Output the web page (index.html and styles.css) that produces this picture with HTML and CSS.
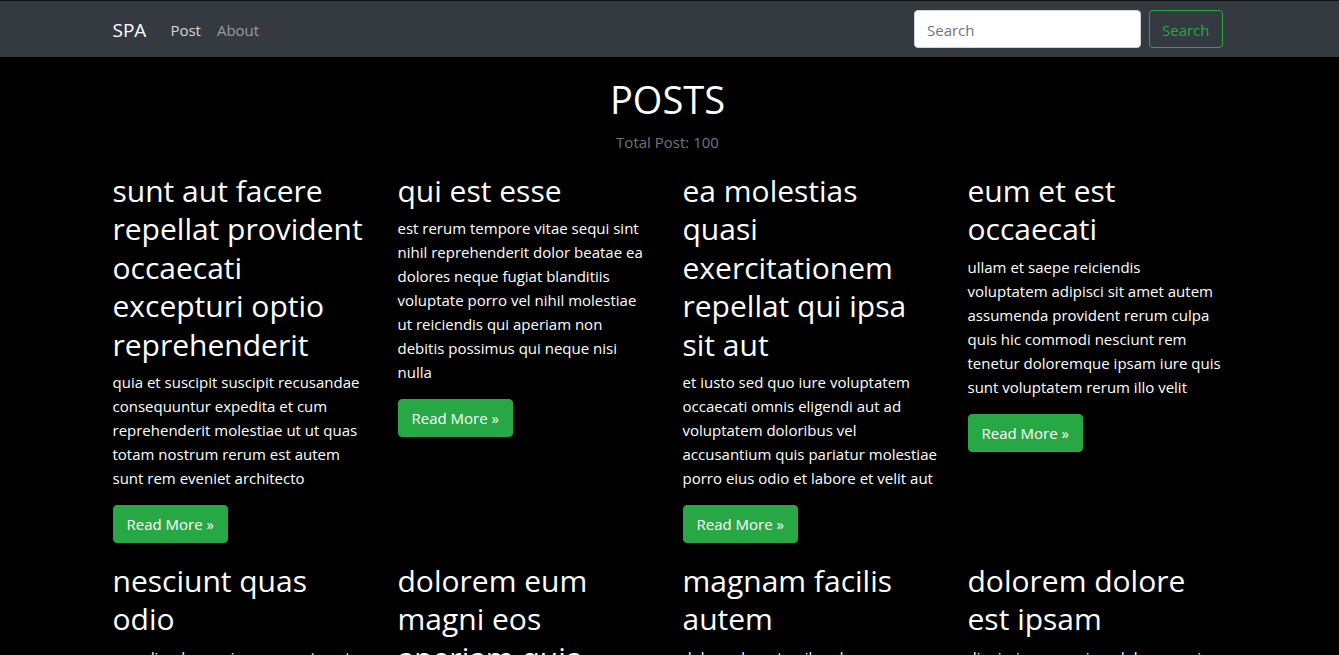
FILE: index.html
```html
<!DOCTYPE html>
<html lang="en">
<head>
<meta charset="utf-8">
<meta name="viewport" content="width=device-width, initial-scale=1">
<title>SPA</title>
<link rel="stylesheet" href="styles.css">
</head>
<body>
<header class="navbar">
  <nav class="container navbar-inner">
    <a class="brand" href="#">SPA</a>
    <ul class="nav-list">
      <li><a class="nav-link active" href="#post">Post</a></li>
      <li><a class="nav-link" href="#about">About</a></li>
    </ul>
    <form class="search" role="search">
      <input class="search-input" type="search" placeholder="Search" aria-label="Search">
      <button class="btn btn-outline" type="submit">Search</button>
    </form>
  </nav>
</header>
<main class="content">
  <div class="container">
    <h1 class="page-title">POSTS</h1>
    <p class="total">Total Post: 100</p>
    <div class="posts">
      <article class="post">
        <h2 class="post-title">sunt aut facere repellat provident occaecati excepturi optio reprehenderit</h2>
        <p class="post-body">quia et suscipit suscipit recusandae consequuntur expedita et cum reprehenderit molestiae ut ut quas totam nostrum rerum est autem sunt rem eveniet architecto</p>
        <a class="btn btn-success" href="#1">Read More »</a>
      </article>
      <article class="post">
        <h2 class="post-title">qui est esse</h2>
        <p class="post-body">est rerum tempore vitae sequi sint nihil reprehenderit dolor beatae ea dolores neque fugiat blanditiis voluptate porro vel nihil molestiae ut reiciendis qui aperiam non debitis possimus qui neque nisi nulla</p>
        <a class="btn btn-success" href="#2">Read More »</a>
      </article>
      <article class="post">
        <h2 class="post-title">ea molestias quasi exercitationem repellat qui ipsa sit aut</h2>
        <p class="post-body">et iusto sed quo iure voluptatem occaecati omnis eligendi aut ad voluptatem doloribus vel accusantium quis pariatur molestiae porro eius odio et labore et velit aut</p>
        <a class="btn btn-success" href="#3">Read More »</a>
      </article>
      <article class="post">
        <h2 class="post-title">eum et est occaecati</h2>
        <p class="post-body">ullam et saepe reiciendis voluptatem adipisci sit amet autem assumenda provident rerum culpa quis hic commodi nesciunt rem tenetur doloremque ipsam iure quis sunt voluptatem rerum illo velit</p>
        <a class="btn btn-success" href="#4">Read More »</a>
      </article>
      <article class="post">
        <h2 class="post-title">nesciunt quas odio</h2>
        <p class="post-body">repudiandae veniam quaerat sunt</p>
      </article>
      <article class="post">
        <h2 class="post-title">dolorem eum magni eos aperiam quia</h2>
      </article>
      <article class="post">
        <h2 class="post-title">magnam facilis autem</h2>
        <p class="post-body">dolore placeat quibusdam ea quo</p>
      </article>
      <article class="post">
        <h2 class="post-title">dolorem dolore est ipsam</h2>
        <p class="post-body">dignissimos aperiam dolorem qui</p>
      </article>
    </div>
  </div>
</main>
</body>
</html>
```
FILE: styles.css
```css
*, *::before, *::after { box-sizing: border-box; }

html { scrollbar-width: none; }

body {
  margin: 0;
  background: #000;
  color: #fff;
  font-family: "Open Sans", "Noto Sans", sans-serif;
  font-size: 15px;
  line-height: 24px;
}

a { text-decoration: none; }

.container {
  width: 100%;
  max-width: 1140px;
  margin: 0 auto;
  padding: 0 15px;
}

.navbar {
  border-top: 1px solid #111;
  background: #343a40;
  padding: 8px 4px 8px 0;
}

.navbar-inner {
  display: flex;
  align-items: center;
  min-height: 40px;
}

.brand {
  margin-right: 16px;
  padding-top: 2px;
  color: #fff;
  font-size: 19px;
  line-height: 30px;
}

.nav-list {
  display: flex;
  margin: 0 auto 0 0;
  padding: 0;
  list-style: none;
}

.nav-link {
  display: block;
  padding: 9px 8px 7px;
  color: #999ca0;
}

.nav-link.active { color: #d6d8d9; }

.search {
  display: flex;
  gap: 8px;
}

.search-input {
  width: 227px;
  height: 38px;
  padding: 7px 12px 5px;
  border: 1px solid #ced4da;
  border-radius: 4px;
  background: #fff;
  color: #495057;
  font: inherit;
  appearance: none;
}

.search-input::placeholder { color: #6c757d; opacity: 1; }

.btn {
  display: inline-block;
  padding: 7px 12px 5px;
  border: 1px solid #28a745;
  border-radius: 4px;
  font: inherit;
}

.btn-outline { background: transparent; color: #28a745; }

.btn-success {
  padding: 6px 13px;
  background: #28a745;
  color: #fff;
}

.content { padding: 18px 4px 0 0; }

.page-title {
  margin: 0 0 7px;
  font-size: 38px;
  font-weight: 400;
  line-height: 48px;
  text-align: center;
}

.total {
  margin: 0 0 15px;
  color: #6c757d;
  text-align: center;
}

.posts {
  display: grid;
  grid-template-columns: repeat(4, minmax(0, 1fr));
  gap: 16px 30px;
}

.post-title {
  margin: 0 0 6px;
  padding-top: 3px;
  font-size: 30px;
  font-weight: 400;
  line-height: 1.28;
}

.post-body { margin: 0 0 15px; }
```
